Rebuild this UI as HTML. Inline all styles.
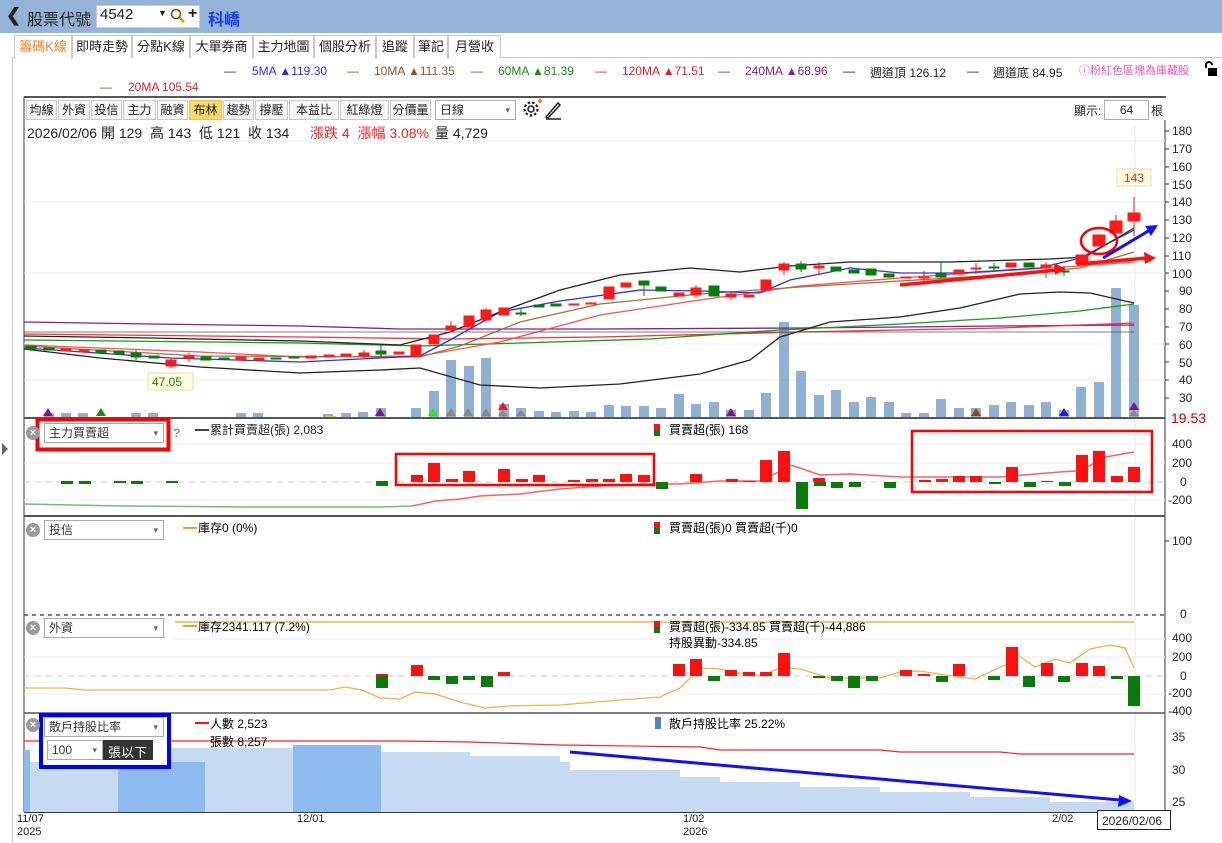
<!DOCTYPE html>
<html><head><meta charset="utf-8">
<style>
*{margin:0;padding:0;box-sizing:border-box}
body{width:1222px;height:843px;overflow:hidden;background:#fff;font-family:"Liberation Sans","Noto Sans CJK TC",sans-serif;font-size:12px;color:#222;position:relative}
.a{position:absolute;white-space:nowrap}
.hdr{position:absolute;left:0;top:0;width:1222px;height:33px;background:#95b3d7}
.tab{position:absolute;top:35px;height:23px;border:1px solid #c8c8c8;border-bottom:none;background:#fff;font-size:13px;line-height:21px;text-align:center}
.btn{position:absolute;top:100px;height:20px;border:1px solid #c8c8c8;background:#f6f6f6;font-size:12px;line-height:18px;text-align:center}
.sel{position:absolute;height:20px;border:1px solid #aaa;background:#fff;font-size:12px;line-height:18px;padding-left:4px;color:#333}
.sel:after{content:"▾";position:absolute;right:5px;top:0;font-size:9px;color:#666}
.cls{position:absolute;width:14px;height:14px;border-radius:7px;background:#9a9a9a;color:#fff;font-size:11px;line-height:14px;text-align:center;font-weight:bold}
</style></head><body>
<div class="hdr"></div>
<div class="a" style="left:6px;top:5px;font-size:18px;font-weight:bold;color:#222">&#10094;</div>
<div class="a" style="left:27px;top:6px;font-size:16px;color:#222">股票代號</div>
<div class="a" style="left:96px;top:5px;width:104px;height:23px;background:#fff;border:1px solid #ccc"></div>
<div class="a" style="left:100px;top:6px;font-size:15px">4542</div>
<div class="a" style="left:158px;top:8px;font-size:9px">▼</div>
<svg class="a" style="left:170px;top:8px" width="16" height="16"><circle cx="6" cy="6" r="4.5" fill="#fff8c0" stroke="#555" stroke-width="1.5"/><line x1="9.5" y1="9.5" x2="14" y2="14" stroke="#c8a000" stroke-width="2.5"/></svg>
<div class="a" style="left:188px;top:5px;font-size:16px;font-weight:bold">+</div>
<div class="a" style="left:208px;top:6px;font-size:16px;font-weight:bold;color:#1a3aff">科嶠</div>

<div class="a" style="left:12px;top:57px;width:1210px;height:1px;background:#c8c8c8"></div>
<div class="tab" style="left:14px;width:58px;color:#f08020;height:24px">籌碼K線</div>
<div class="tab" style="left:72px;width:60px">即時走勢</div>
<div class="tab" style="left:132px;width:58px">分點K線</div>
<div class="tab" style="left:190px;width:63px">大單券商</div>
<div class="tab" style="left:253px;width:61px">主力地圖</div>
<div class="tab" style="left:314px;width:62px">個股分析</div>
<div class="tab" style="left:376px;width:38px">追蹤</div>
<div class="tab" style="left:414px;width:34px">筆記</div>
<div class="tab" style="left:448px;width:53px">月營收</div>

<div class="a" style="left:12px;top:58px;width:1px;height:785px;background:#d0d0d0"></div>

<div class="a" style="top:64px;left:224px;color:#2020d0">—</div><div class="a" style="top:64px;left:252px;color:#3030e0">5MA ▲119.30</div>
<div class="a" style="top:64px;left:347px;color:#8b5a2b">—</div><div class="a" style="top:64px;left:374px;color:#8b5a2b">10MA ▲111.35</div>
<div class="a" style="top:64px;left:471px;color:#1a8a1a">—</div><div class="a" style="top:64px;left:498px;color:#1a8a1a">60MA ▲81.39</div>
<div class="a" style="top:64px;left:595px;color:#e02020">—</div><div class="a" style="top:64px;left:622px;color:#e02020">120MA ▲71.51</div>
<div class="a" style="top:64px;left:718px;color:#8a1a9a">—</div><div class="a" style="top:64px;left:745px;color:#8a1a9a">240MA ▲68.96</div>
<div class="a" style="top:64px;left:843px">—</div><div class="a" style="top:64px;left:870px">週道頂 126.12</div>
<div class="a" style="top:64px;left:967px">—</div><div class="a" style="top:64px;left:993px">週道底 84.95</div>
<div class="a" style="top:62px;left:1079px;color:#f050c0;font-size:11px">ⓘ粉紅色區塊為庫藏股</div>
<svg class="a" style="left:1203px;top:61px" width="16" height="16"><path d="M3 7V4a3 3 0 0 1 6 0" fill="none" stroke="#000" stroke-width="2"/><rect x="5" y="7" width="9" height="8" fill="#000"/></svg>
<div class="a" style="top:80px;left:100px;color:#e02020">—</div><div class="a" style="top:80px;left:128px;color:#e02020">20MA 105.54</div>

<div class="a" style="left:24px;top:96px;width:1142px;height:2px;background:#555"></div>
<div class="btn" style="left:26px;width:31px">均線</div>
<div class="btn" style="left:58px;width:32px">外資</div>
<div class="btn" style="left:91px;width:31px">投信</div>
<div class="btn" style="left:123px;width:33px">主力</div>
<div class="btn" style="left:157px;width:31px">融資</div>
<div class="btn" style="left:189px;width:33px;background:#fbd66a;border-color:#e8c050">布林</div>
<div class="btn" style="left:223px;width:31px">趨勢</div>
<div class="btn" style="left:255px;width:33px">撐壓</div>
<div class="btn" style="left:289px;width:50px">本益比</div>
<div class="btn" style="left:340px;width:49px">紅綠燈</div>
<div class="btn" style="left:390px;width:41px">分價量</div>
<div class="sel" style="left:435px;top:100px;width:81px">日線</div>
<svg class="a" style="left:522px;top:98px" width="40" height="22"><circle cx="9" cy="11" r="3" fill="none" stroke="#222" stroke-width="1.5"/><circle cx="9" cy="11" r="6.5" fill="none" stroke="#222" stroke-width="2.2" stroke-dasharray="2.5 2"/><circle cx="18" cy="3" r="2" fill="#f08020"/><path d="M24 19L36 5l2 2L26 20z" fill="none" stroke="#222" stroke-width="1.5"/><line x1="24" y1="21" x2="39" y2="21" stroke="#222" stroke-width="1.5"/></svg>
<div class="a" style="left:1074px;top:102px">顯示:</div>
<div class="a" style="left:1104px;top:100px;width:45px;height:20px;border:1px solid #aaa;text-align:center;line-height:18px">64</div>
<div class="a" style="left:1151px;top:102px">根</div>
<div class="a" style="left:27px;top:123px;font-size:14px">2026/02/06 開 129&nbsp; 高 143&nbsp; 低 121&nbsp; 收 134</div>
<div class="a" style="left:310px;top:123px;font-size:14px;color:#ff2020">漲跌 4&nbsp; 漲幅 3.08%</div>
<div class="a" style="left:435px;top:123px;font-size:14px">量 4,729</div>

<svg class="a" style="left:0;top:0" width="1222" height="843" font-family="Liberation Sans, Noto Sans CJK TC, sans-serif" font-size="12">
<path d="M2 443l6 6-6 6z" fill="#666"/>
<line x1="24" y1="97" x2="24" y2="812" stroke="#333"/>
<line x1="1165" y1="120" x2="1165" y2="812" stroke="#333"/>
<line x1="1135" y1="125" x2="1135" y2="812" stroke="#e6e6e6"/>
<g stroke="#ececec">
<line x1="24" y1="141" x2="1165" y2="141"/><line x1="24" y1="202" x2="1165" y2="202"/><line x1="24" y1="273" x2="1165" y2="273"/><line x1="24" y1="344" x2="1165" y2="344"/><line x1="24" y1="380" x2="1165" y2="380"/>
</g>
<g fill="#222" font-size="12">
<text x="1172" y="135">180</text><text x="1172" y="153">170</text><text x="1172" y="171">160</text><text x="1172" y="189">150</text><text x="1172" y="206">140</text><text x="1172" y="224">130</text><text x="1172" y="242">120</text><text x="1172" y="260">110</text><text x="1172" y="278">100</text><text x="1179" y="295">90</text><text x="1179" y="313">80</text><text x="1179" y="331">70</text><text x="1179" y="349">60</text><text x="1179" y="367">50</text><text x="1179" y="384">40</text><text x="1179" y="402">30</text>
</g>
<g stroke="#333"><line x1="1165" y1="131" x2="1169" y2="131"/><line x1="1165" y1="149" x2="1169" y2="149"/><line x1="1165" y1="167" x2="1169" y2="167"/><line x1="1165" y1="184" x2="1169" y2="184"/><line x1="1165" y1="202" x2="1169" y2="202"/><line x1="1165" y1="220" x2="1169" y2="220"/><line x1="1165" y1="238" x2="1169" y2="238"/><line x1="1165" y1="256" x2="1169" y2="256"/><line x1="1165" y1="273" x2="1169" y2="273"/><line x1="1165" y1="291" x2="1169" y2="291"/><line x1="1165" y1="309" x2="1169" y2="309"/><line x1="1165" y1="327" x2="1169" y2="327"/><line x1="1165" y1="344" x2="1169" y2="344"/><line x1="1165" y1="362" x2="1169" y2="362"/><line x1="1165" y1="380" x2="1169" y2="380"/><line x1="1165" y1="398" x2="1169" y2="398"/></g>
<text x="1171" y="423" fill="#c00000" font-size="14">19.53</text>

<g fill="#8fb0d2">
<rect x="44" y="413" width="10" height="4"/><rect x="61" y="413" width="10" height="4"/><rect x="78" y="413" width="10" height="4"/><rect x="131" y="413" width="10" height="4"/><rect x="148" y="413" width="10" height="4"/><rect x="236" y="413" width="10" height="4"/><rect x="253" y="413" width="10" height="4"/>
<rect x="323" y="414" width="10" height="3"/><rect x="341" y="413" width="10" height="4"/><rect x="358" y="412" width="10" height="5"/><rect x="376" y="408" width="10" height="9"/><rect x="411" y="408" width="10" height="9"/><rect x="429" y="391" width="10" height="26"/><rect x="446" y="360" width="10" height="57"/><rect x="464" y="366" width="10" height="51"/><rect x="481" y="358" width="10" height="59"/><rect x="499" y="404" width="10" height="13"/><rect x="516" y="408" width="10" height="9"/><rect x="534" y="411" width="10" height="6"/><rect x="551" y="412" width="10" height="5"/><rect x="569" y="411" width="10" height="6"/><rect x="586" y="412" width="10" height="5"/><rect x="604" y="405" width="10" height="12"/><rect x="621" y="406" width="10" height="11"/><rect x="639" y="406" width="10" height="11"/><rect x="656" y="408" width="10" height="9"/><rect x="674" y="394" width="10" height="23"/><rect x="691" y="404" width="10" height="13"/><rect x="709" y="402" width="10" height="15"/><rect x="726" y="410" width="10" height="7"/><rect x="744" y="410" width="10" height="7"/><rect x="761" y="393" width="10" height="24"/><rect x="779" y="322" width="10" height="95"/><rect x="796" y="371" width="10" height="46"/><rect x="814" y="395" width="10" height="22"/><rect x="831" y="390" width="10" height="27"/><rect x="849" y="402" width="10" height="15"/><rect x="866" y="397" width="10" height="20"/><rect x="884" y="402" width="10" height="15"/><rect x="901" y="413" width="10" height="4"/><rect x="919" y="413" width="10" height="4"/><rect x="936" y="399" width="10" height="18"/><rect x="954" y="408" width="10" height="9"/><rect x="971" y="408" width="10" height="9"/><rect x="989" y="405" width="10" height="12"/><rect x="1006" y="402" width="10" height="15"/><rect x="1024" y="405" width="10" height="12"/><rect x="1041" y="402" width="10" height="15"/><rect x="1059" y="410" width="10" height="7"/><rect x="1076" y="387" width="10" height="30"/><rect x="1094" y="382" width="10" height="35"/><rect x="1111" y="288" width="10" height="129"/><rect x="1129" y="305" width="10" height="112"/>
</g>
<g>
<path d="M43 416l5-8 5 8z" fill="#7a1a8a"/><path d="M96 416l5-8 5 8z" fill="#1a8a1a"/><path d="M375 416l5-8 5 8z" fill="#7a1a8a"/><path d="M428 416l5-8 5 8z" fill="#30e030"/><path d="M446 416l5-8 5 8z" fill="#888"/><path d="M463 416l5-8 5 8z" fill="#888"/><path d="M481 416l5-8 5 8z" fill="#888"/><path d="M498 410l5-8 5 8z" fill="#e02020"/><path d="M498 416l5-6 5 6z" fill="#888"/><path d="M516 416l5-6 5 6z" fill="#888"/><path d="M726 416l5-8 5 8z" fill="#7a1a8a"/><path d="M971 416l5-8 5 8z" fill="#8b4a1a"/><path d="M1059 416l5-8 5 8z" fill="#2020d0"/><path d="M1129 410l5-8 5 8z" fill="#7a1a8a"/><path d="M1129 416l5-6 5 6z" fill="#888"/>
<rect x="326" y="416" width="10" height="2" fill="#f0d000"/>
</g>
<g fill="none" stroke-width="1.3">
<polyline stroke="#8a1a9a" points="24,322 150,324 300,326 400,329 600,329 800,328 1000,326 1134,325"/>
<polyline stroke="#ff3030" points="24,334 300,337 450,339 600,337 800,332 1000,328 1134,323"/>
<polyline stroke="#1a9a1a" points="24,340 300,343 420,346 520,343 650,339 780,330 900,324 1000,318 1080,311 1134,304"/>
<polyline stroke="#ff5050" points="24,345 200,352 300,357 420,356 500,342 600,315 700,300 800,286 900,278 1000,271 1080,266 1134,262"/>
<polyline stroke="#a0703a" points="24,346 200,356 420,357 460,346 520,322 600,304 700,294 800,287 900,281 1000,275 1080,268 1134,252"/>
<polyline stroke="#3030e0" points="24,348 170,358 300,362 420,356 450,340 500,312 560,301 640,290 700,291 760,293 790,280 850,268 900,273 960,273 1040,268 1080,258 1134,230"/>
<polyline stroke="#222" points="24,336 150,338 300,341 400,345 450,332 500,312 560,290 620,275 690,268 740,272 790,266 850,262 950,262 1050,259 1085,257 1134,228"/>
<polyline stroke="#222" points="24,349 100,358 200,367 300,373 380,370 420,368 480,385 540,388 620,384 700,374 750,360 780,337 830,322 900,317 960,308 1020,294 1060,292 1090,293 1134,303"/>
<line x1="24" y1="332" x2="1134" y2="332" stroke="#555" stroke-width="0.8"/>
</g>
<g stroke-width="1">
<g fill="#ff1a1a" stroke="#ff1a1a">
<rect x="61" y="349" width="10" height="2"/><rect x="79" y="350" width="10" height="2"/>
<line x1="171" y1="358" x2="171" y2="368"/><rect x="166" y="360" width="10" height="6"/>
<line x1="189" y1="353" x2="189" y2="362"/><rect x="184" y="356" width="10" height="2"/>
<rect x="236" y="357" width="10" height="3"/><rect x="254" y="358" width="10" height="2"/><rect x="306" y="356" width="10" height="2"/><rect x="324" y="355" width="10" height="2"/><rect x="341" y="354" width="10" height="2"/><line x1="364" y1="350" x2="364" y2="359"/><rect x="359" y="353" width="10" height="3"/><rect x="394" y="352" width="10" height="2"/>
<rect x="411" y="345" width="10" height="11"/><rect x="429" y="335" width="10" height="9"/><line x1="451" y1="321" x2="451" y2="330"/><rect x="446" y="326" width="10" height="4"/><rect x="464" y="316" width="10" height="11"/><line x1="486" y1="308" x2="486" y2="322"/><rect x="481" y="310" width="10" height="10"/><rect x="499" y="308" width="10" height="7"/>
<rect x="569" y="304" width="10" height="1"/><rect x="586" y="303" width="10" height="1"/><rect x="604" y="287" width="10" height="12"/><rect x="621" y="283" width="10" height="4"/><rect x="674" y="293" width="10" height="3"/><line x1="696" y1="285" x2="696" y2="298"/><rect x="691" y="288" width="10" height="7"/><line x1="731" y1="291" x2="731" y2="300"/><rect x="726" y="294" width="10" height="3"/><rect x="744" y="295" width="10" height="2"/>
<rect x="761" y="280" width="10" height="10"/><line x1="784" y1="262" x2="784" y2="275"/><rect x="779" y="264" width="10" height="6"/><line x1="819" y1="262" x2="819" y2="274"/><rect x="814" y="266" width="10" height="2"/>
<rect x="901" y="277" width="10" height="1"/><line x1="924" y1="271" x2="924" y2="285"/><rect x="919" y="277" width="10" height="1"/><rect x="954" y="270" width="10" height="4"/><line x1="976" y1="263" x2="976" y2="274"/><rect x="971" y="268" width="10" height="1"/><rect x="1006" y="263" width="10" height="4"/><line x1="1046" y1="262" x2="1046" y2="278"/><rect x="1041" y="265" width="10" height="2"/>
<rect x="1076" y="255" width="12" height="9"/><rect x="1093" y="235" width="12" height="11"/><line x1="1116" y1="215" x2="1116" y2="233"/><rect x="1110" y="221" width="12" height="12"/><line x1="1134" y1="197" x2="1134" y2="236"/><rect x="1128" y="213" width="12" height="8"/>
</g>
<g fill="#0a7a0a" stroke="#0a7a0a">
<rect x="26" y="346" width="10" height="3"/><rect x="44" y="348" width="10" height="2"/><rect x="96" y="350" width="10" height="3"/><rect x="114" y="351" width="10" height="3"/><line x1="136" y1="350" x2="136" y2="360"/><rect x="131" y="353" width="10" height="4"/><rect x="149" y="356" width="10" height="2"/><rect x="201" y="357" width="10" height="3"/><rect x="219" y="358" width="10" height="1"/><rect x="271" y="358" width="10" height="1"/><rect x="289" y="357" width="10" height="1"/>
<line x1="381" y1="345" x2="381" y2="357"/><rect x="376" y="351" width="10" height="3"/><line x1="521" y1="309" x2="521" y2="316"/><rect x="516" y="313" width="10" height="1"/><rect x="534" y="305" width="10" height="2"/><rect x="551" y="304" width="10" height="2"/>
<line x1="644" y1="281" x2="644" y2="296"/><rect x="639" y="281" width="10" height="4"/><rect x="656" y="287" width="10" height="4"/><rect x="709" y="286" width="10" height="10"/><line x1="801" y1="261" x2="801" y2="272"/><rect x="796" y="264" width="10" height="5"/><rect x="831" y="267" width="10" height="4"/><rect x="849" y="270" width="10" height="3"/><rect x="866" y="269" width="10" height="6"/><rect x="884" y="274" width="10" height="3"/><line x1="941" y1="261" x2="941" y2="278"/><rect x="936" y="274" width="10" height="3"/><line x1="994" y1="263" x2="994" y2="272"/><rect x="989" y="267" width="10" height="1"/><rect x="1024" y="263" width="10" height="4"/><line x1="1064" y1="266" x2="1064" y2="276"/><rect x="1059" y="271" width="10" height="1"/>
</g>
</g>
<rect x="1117" y="169" width="34" height="17" fill="#ffffe0" stroke="#e0e0b0"/><text x="1124" y="182" fill="#ff2020">143</text>
<rect x="148" y="373" width="45" height="17" fill="#ffffe0" stroke="#e0e0b0"/><text x="152" y="386" fill="#0a8a0a">47.05</text>
<ellipse cx="1099" cy="241" rx="18" ry="13" fill="none" stroke="#ff0000" stroke-width="2.5"/>
<g stroke="#ff1010" stroke-width="3.5" fill="#ff1010"><line x1="900" y1="285" x2="1058" y2="270"/><path d="M1066 269l-12-6 1 12z" stroke="none"/><line x1="1077" y1="264" x2="1148" y2="258"/><path d="M1156 258l-12-6 1 12z" stroke="none"/></g>
<g stroke="#1010ff" stroke-width="3" fill="#1010ff"><line x1="1103" y1="258" x2="1150" y2="230"/><path d="M1158 225l-13 1 6 10z" stroke="none"/></g>

<line x1="24" y1="418" x2="1165" y2="418" stroke="#555" stroke-width="2"/>
<line x1="24" y1="516" x2="1165" y2="516" stroke="#555" stroke-width="2"/>
<line x1="24" y1="615" x2="1165" y2="615" stroke="#555" stroke-width="1.5" stroke-dasharray="4 4"/>
<line x1="24" y1="713" x2="1165" y2="713" stroke="#555" stroke-width="1.5"/>
<line x1="24" y1="812" x2="1165" y2="812" stroke="#333" stroke-width="2"/>

<g stroke="#ececec"><line x1="24" y1="444" x2="1165" y2="444"/><line x1="24" y1="463" x2="1165" y2="463"/><line x1="24" y1="500" x2="1165" y2="500"/></g>
<line x1="24" y1="482" x2="1165" y2="482" stroke="#ccc" stroke-dasharray="6 5"/>
<g fill="#222"><text x="1172" y="448">400</text><text x="1172" y="467">200</text><text x="1180" y="486">0</text><text x="1168" y="504">-200</text></g>
<polyline fill="none" stroke="#70c070" stroke-width="1.5" points="24,504 120,506 250,507 380,507 412,506"/>
<polyline fill="none" stroke="#ff6060" stroke-width="1.5" points="412,506 436,501 460,499 480,496 520,494 560,489 600,486 640,484 680,484 720,481 760,481 783,470 790,465 800,468 820,475 850,474 900,477 1000,477 1060,472 1075,471 1090,466 1100,458 1134,452"/>
<g fill="#0a7a0a"><rect x="61" y="481" width="12" height="3"/><rect x="79" y="481" width="12" height="3"/><rect x="114" y="481" width="12" height="2"/><rect x="131" y="481" width="12" height="3"/><rect x="166" y="481" width="12" height="2"/><rect x="376" y="481" width="12" height="5"/><rect x="656" y="482" width="12" height="7"/><rect x="796" y="482" width="12" height="27"/><rect x="814" y="482" width="12" height="4"/><rect x="831" y="482" width="12" height="6"/><rect x="849" y="482" width="12" height="5"/><rect x="884" y="482" width="12" height="6"/><rect x="989" y="482" width="12" height="2"/><rect x="1024" y="482" width="12" height="5"/><rect x="1059" y="482" width="12" height="4"/></g>
<g fill="#ff1010"><rect x="411" y="475" width="12" height="7"/><rect x="428" y="463" width="12" height="19"/><rect x="446" y="479" width="12" height="3"/><rect x="463" y="471" width="12" height="11"/><rect x="498" y="469" width="12" height="13"/><rect x="516" y="479" width="12" height="3"/><rect x="533" y="475" width="12" height="7"/><rect x="568" y="480" width="12" height="2"/><rect x="586" y="479" width="12" height="3"/><rect x="603" y="479" width="12" height="3"/><rect x="620" y="474" width="12" height="8"/><rect x="638" y="475" width="12" height="7"/><rect x="690" y="474" width="12" height="8"/><rect x="726" y="479" width="12" height="3"/><rect x="743" y="481" width="12" height="1"/><rect x="760" y="460" width="12" height="22"/><rect x="778" y="451" width="12" height="31"/><rect x="813" y="478" width="12" height="4"/><rect x="919" y="480" width="12" height="2"/><rect x="936" y="479" width="12" height="3"/><rect x="953" y="476" width="12" height="6"/><rect x="970" y="476" width="12" height="6"/><rect x="1006" y="467" width="12" height="15"/><rect x="1041" y="481" width="12" height="1"/><rect x="1076" y="455" width="12" height="27"/><rect x="1093" y="451" width="12" height="31"/><rect x="1111" y="476" width="12" height="6"/><rect x="1128" y="467" width="12" height="15"/></g>
<rect x="396" y="454" width="258" height="31" fill="none" stroke="#ff0000" stroke-width="2.5"/>
<rect x="912" y="431" width="240" height="61" fill="none" stroke="#ff0000" stroke-width="2.5"/>
<rect x="37.5" y="419.5" width="131" height="30" fill="none" stroke="#ff0000" stroke-width="4"/>
<text x="173" y="437" fill="#5b9bd5" font-weight="bold">?</text>
<line x1="195" y1="430" x2="209" y2="430" stroke="#444" stroke-width="2"/><text x="210" y="434" fill="#222">累計買賣超(張) 2,083</text>
<rect x="654" y="424" width="6" height="6" fill="#ff1010"/><rect x="654" y="430" width="6" height="6" fill="#0a7a0a"/><text x="669" y="434">買賣超(張) 168</text>

<g fill="#222"><text x="1172" y="545">100</text><text x="1180" y="618">0</text></g>
<line x1="1165" y1="541" x2="1169" y2="541" stroke="#333"/>
<line x1="183" y1="528" x2="197" y2="528" stroke="#f5a020" stroke-width="2"/><text x="198" y="532">庫存0 (0%)</text>
<rect x="654" y="522" width="6" height="6" fill="#ff1010"/><rect x="654" y="528" width="6" height="6" fill="#0a7a0a"/><text x="669" y="532">買賣超(張)0 買賣超(千)0</text>

<line x1="175" y1="622" x2="1134" y2="622" stroke="#f5a020" stroke-width="1.2"/>
<g stroke="#ececec"><line x1="175" y1="639" x2="1165" y2="639"/><line x1="24" y1="657" x2="1165" y2="657"/><line x1="24" y1="694" x2="1165" y2="694"/></g>
<line x1="24" y1="676" x2="1165" y2="676" stroke="#ccc" stroke-dasharray="6 5"/>
<g fill="#222"><text x="1172" y="642">400</text><text x="1172" y="661">200</text><text x="1180" y="680">0</text><text x="1168" y="697">-200</text><text x="1168" y="715">-400</text></g>
<polyline fill="none" stroke="#f5b040" stroke-width="1.3" points="24,688 65,688 85,690 140,690 330,690 345,687 362,690 380,698 400,699 415,692 435,694 460,702 485,708 510,706 560,705 620,700 660,697 680,688 700,668 720,669 740,673 760,676 780,668 800,669 830,678 860,678 880,678 900,672 920,671 945,675 975,679 1005,665 1018,655 1035,667 1055,659 1070,663 1090,649 1110,645 1125,648 1134,668"/>
<g fill="#ff1010"><rect x="376" y="674" width="12" height="2"/><rect x="411" y="665" width="12" height="11"/><rect x="498" y="672" width="12" height="4"/><rect x="673" y="664" width="12" height="12"/><rect x="690" y="659" width="12" height="17"/><rect x="725" y="670" width="12" height="6"/><rect x="743" y="672" width="12" height="4"/><rect x="760" y="672" width="12" height="4"/><rect x="778" y="653" width="12" height="23"/><rect x="900" y="670" width="12" height="6"/><rect x="918" y="674" width="12" height="2"/><rect x="953" y="664" width="12" height="12"/><rect x="1006" y="647" width="12" height="29"/><rect x="1041" y="663" width="12" height="13"/><rect x="1076" y="663" width="12" height="13"/><rect x="1093" y="666" width="12" height="10"/></g>
<g fill="#0a7a0a"><rect x="376" y="676" width="12" height="12"/><rect x="428" y="676" width="12" height="4"/><rect x="446" y="676" width="12" height="8"/><rect x="463" y="676" width="12" height="4"/><rect x="481" y="676" width="12" height="11"/><rect x="708" y="676" width="12" height="5"/><rect x="813" y="676" width="12" height="2"/><rect x="831" y="676" width="12" height="5"/><rect x="848" y="676" width="12" height="12"/><rect x="866" y="676" width="12" height="5"/><rect x="936" y="676" width="12" height="6"/><rect x="988" y="676" width="12" height="4"/><rect x="1023" y="676" width="12" height="11"/><rect x="1058" y="676" width="12" height="6"/><rect x="1111" y="676" width="12" height="3"/><rect x="1128" y="676" width="12" height="30"/></g>
<line x1="183" y1="626" x2="197" y2="626" stroke="#f5a020" stroke-width="2"/><text x="198" y="631">庫存2341.117 (7.2%)</text>
<rect x="654" y="621" width="6" height="6" fill="#ff1010"/><rect x="654" y="627" width="6" height="6" fill="#0a7a0a"/><text x="669" y="631">買賣超(張)-334.85 買賣超(千)-44,886</text>
<text x="669" y="647">持股異動-334.85</text>

<path d="M24 812V750H30V762H118V748H205V748H293V745H381V752H470V756H560V762H570V770H680V777H720V782H800V787H880V792H970V797H1050V802H1134V812Z" fill="#c6dbf1"/>
<rect x="24" y="750" width="6" height="62" fill="#8dbbef"/>
<rect x="118" y="762" width="87" height="50" fill="#8dbbef"/>
<rect x="293" y="745" width="88" height="67" fill="#8dbbef"/>
<polyline fill="none" stroke="#ff2020" stroke-width="1.2" points="24,741 400,741 470,742 560,745 700,747 720,750 880,750 900,752 1000,752 1020,754 1134,754"/>
<g fill="#222"><text x="1172" y="741">35</text><text x="1172" y="774">30</text><text x="1172" y="806">25</text></g>
<g stroke="#1010ff" stroke-width="3" fill="#1010ff"><line x1="570" y1="752" x2="1120" y2="800"/><path d="M1132 801l-13-6-1 12z" stroke="none"/></g>
<line x1="195" y1="723" x2="209" y2="723" stroke="#ff1010" stroke-width="2"/><text x="210" y="728">人數 2,523</text>
<text x="210" y="746">張數 8,257</text>
<rect x="655" y="717" width="6" height="12" fill="#4f86c6"/><text x="669" y="728">散戶持股比率 25.22%</text>
<rect x="41" y="715" width="128" height="52" fill="#fff" stroke="#0000ff" stroke-width="4"/>
<rect x="47" y="740" width="106" height="20" fill="#333"/>

<g fill="#222" font-size="11"><text x="17" y="822">11/07</text><text x="17" y="835">2025</text><text x="297" y="822">12/01</text><text x="683" y="822">1/02</text><text x="683" y="835">2026</text><text x="1052" y="822">2/02</text></g>
<rect x="1097.5" y="810.5" width="73" height="19" fill="#fff" stroke="#222"/><text x="1102" y="825" fill="#222" font-size="12">2026/02/06</text>
</svg>

<div class="cls" style="left:26px;top:426px">×</div>
<div class="cls" style="left:26px;top:523px">×</div>
<div class="cls" style="left:26px;top:621px">×</div>
<div class="cls" style="left:26px;top:718px">×</div>
<div class="sel" style="left:44px;top:423px;width:120px">主力買賣超</div>
<div class="sel" style="left:44px;top:520px;width:120px">投信</div>
<div class="sel" style="left:44px;top:618px;width:120px">外資</div>
<div class="sel" style="left:44px;top:717px;width:120px">散戶持股比率</div>
<div class="sel" style="left:47px;top:740px;width:56px">100</div>
<div class="a" style="left:108px;top:742px;color:#fff;font-size:13px">張以下</div>
</body></html>
